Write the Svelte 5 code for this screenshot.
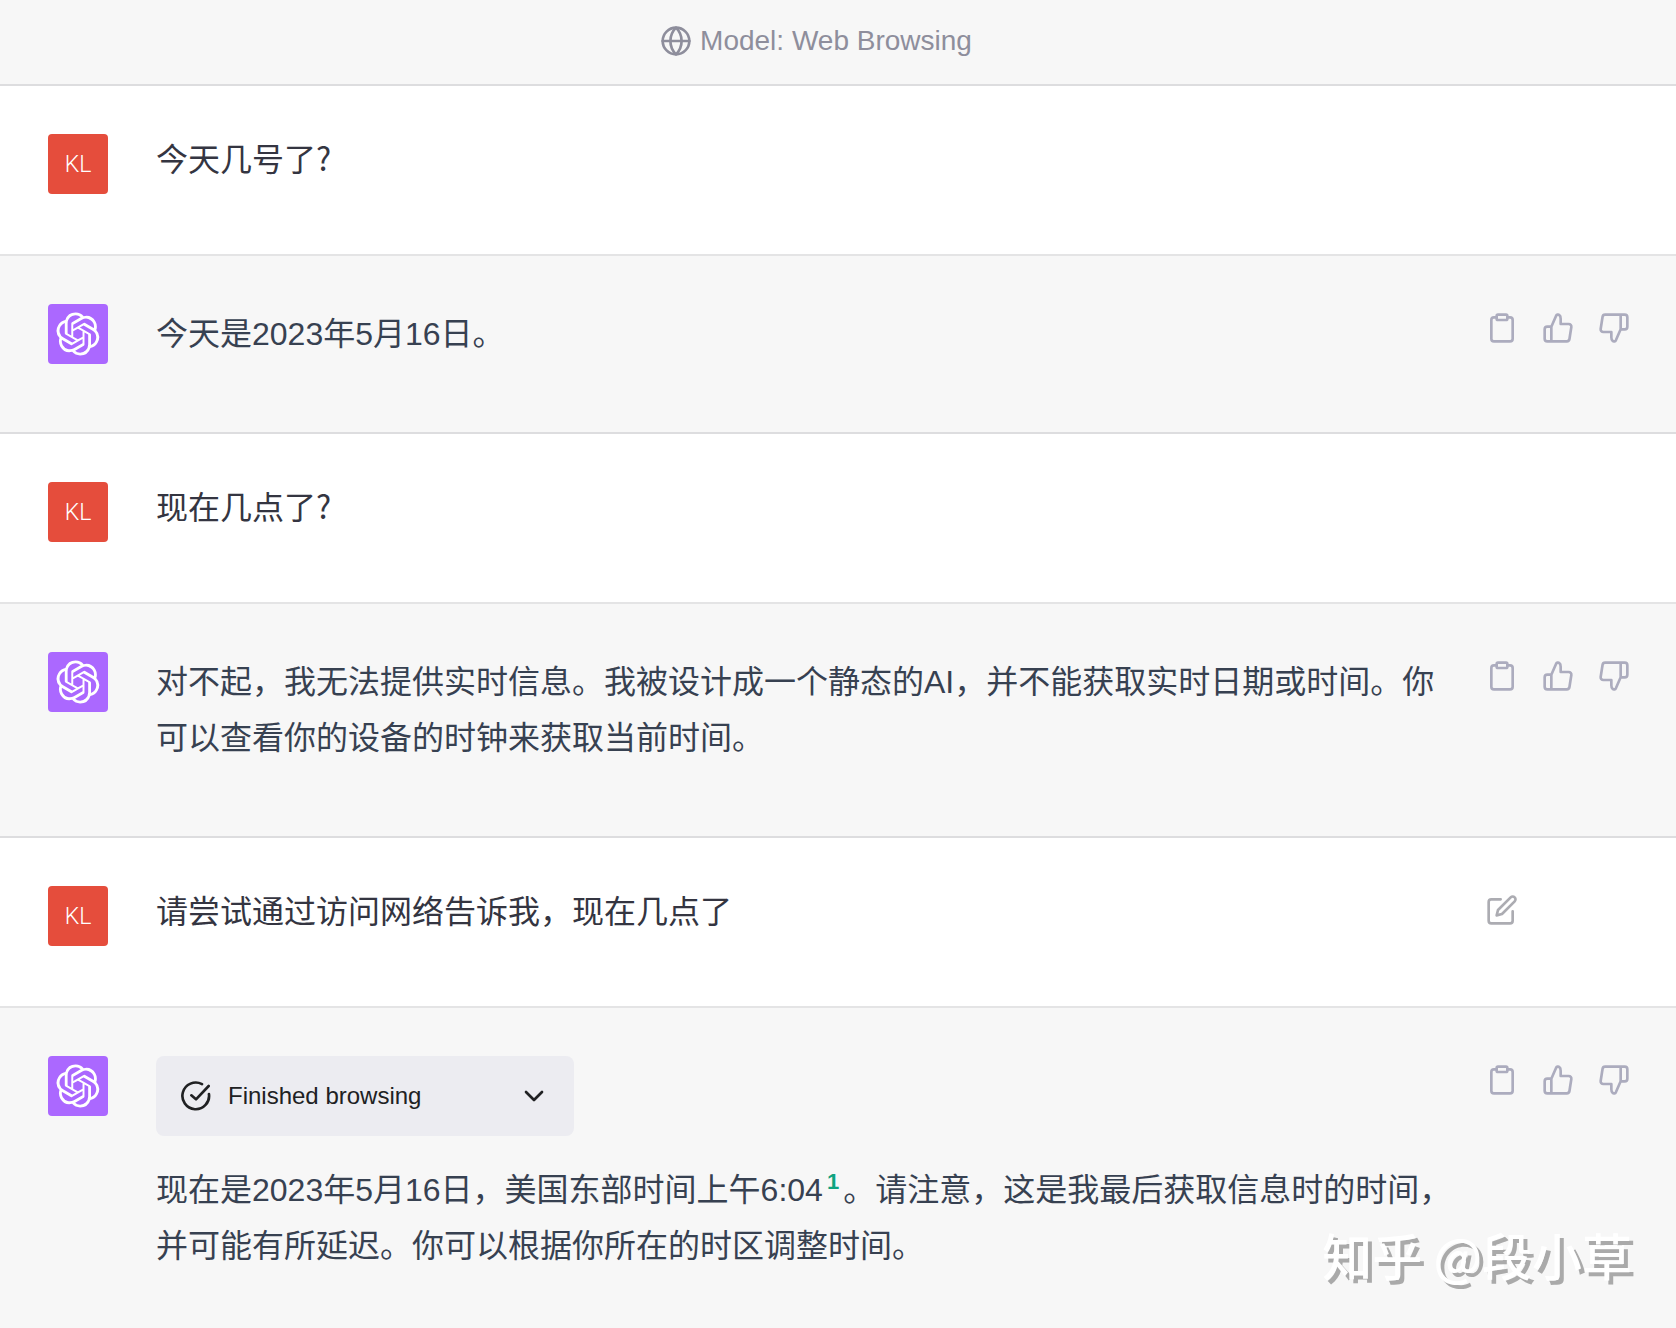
<script lang="ts">
	type Message = {
		role: 'user' | 'assistant';
		text: string;
		browsed?: boolean;
		cite?: number;
		rest?: string;
		editable?: boolean;
	};

	const messages: Message[] = [
		{ role: 'user', text: '今天几号了?' },
		{ role: 'assistant', text: '今天是2023年5月16日。' },
		{ role: 'user', text: '现在几点了?' },
		{
			role: 'assistant',
			text: '对不起，我无法提供实时信息。我被设计成一个静态的AI，并不能获取实时日期或时间。你可以查看你的设备的时钟来获取当前时间。'
		},
		{ role: 'user', text: '请尝试通过访问网络告诉我，现在几点了', editable: true },
		{
			role: 'assistant',
			browsed: true,
			text: '现在是2023年5月16日，美国东部时间上午6:04',
			cite: 1,
			rest: '。请注意，这是我最后获取信息时的时间，并可能有所延迟。你可以根据你所在的时区调整时间。'
		}
	];
</script>

{#snippet thumb()}
	<path d="M7 11l3.600-8.200a1.600 1.600 0 0 1 2.400-.5c.8.6 1 1.600 1 2.700v4h6a2 2 0 0 1 2 2.300l-1.400 9a2 2 0 0 1-2 1.700H4a2 2 0 0 1-2-2v-7a2 2 0 0 1 2-2h3v11" />
{/snippet}

<main>
	<header>
		<svg class="icon" viewBox="0 0 24 24" aria-hidden="true">
			<circle cx="12" cy="12" r="10" />
			<path d="M2 12h20M12 2c2.800 2.800 4.200 6.200 4.200 10s-1.400 7.200-4.200 10c-2.800-2.800-4.200-6.200-4.200-10S9.200 4.800 12 2z" />
		</svg>
		<span>Model: Web Browsing</span>
	</header>

	{#each messages as msg}
		<article class={msg.role}>
			<div class="avatar">
				{#if msg.role === 'user'}
					KL
				{:else}
					<svg viewBox="0 0 41 41" aria-label="ChatGPT">
						<path d="M37.532 16.87a9.963 9.963 0 0 0-.856-8.184 10.078 10.078 0 0 0-10.855-4.835A9.964 9.964 0 0 0 18.306.5a10.079 10.079 0 0 0-9.614 6.977 9.967 9.967 0 0 0-6.664 4.834 10.08 10.08 0 0 0 1.24 11.817 9.965 9.965 0 0 0 .856 8.185 10.079 10.079 0 0 0 10.855 4.835 9.965 9.965 0 0 0 7.516 3.35 10.078 10.078 0 0 0 9.617-6.981 9.967 9.967 0 0 0 6.663-4.834 10.079 10.079 0 0 0-1.243-11.813zM22.498 37.886a7.474 7.474 0 0 1-4.799-1.735c.061-.033.168-.091.237-.134l7.964-4.6a1.294 1.294 0 0 0 .655-1.134V19.054l3.366 1.944a.12.12 0 0 1 .066.092v9.299a7.505 7.505 0 0 1-7.49 7.496zM6.392 31.006a7.471 7.471 0 0 1-.894-5.023c.06.036.162.099.237.141l7.964 4.6a1.297 1.297 0 0 0 1.308 0l9.724-5.614v3.888a.12.12 0 0 1-.048.103l-8.051 4.649a7.504 7.504 0 0 1-10.24-2.744zM4.297 13.62A7.469 7.469 0 0 1 8.2 10.333c0 .068-.004.19-.004.274v9.201a1.294 1.294 0 0 0 .654 1.132l9.723 5.614-3.366 1.944a.12.12 0 0 1-.114.01L7.04 23.856a7.504 7.504 0 0 1-2.743-10.237zm27.658 6.437l-9.724-5.615 3.367-1.943a.121.121 0 0 1 .113-.01l8.052 4.648a7.498 7.498 0 0 1-1.158 13.528v-9.476a1.293 1.293 0 0 0-.65-1.132zm3.35-5.043c-.059-.037-.162-.099-.236-.141l-7.965-4.6a1.298 1.298 0 0 0-1.308 0l-9.723 5.614v-3.888a.12.12 0 0 1 .048-.103l8.05-4.645a7.497 7.497 0 0 1 11.135 7.763zm-21.063 6.929l-3.367-1.944a.12.12 0 0 1-.065-.092v-9.299a7.497 7.497 0 0 1 12.293-5.756 6.94 6.94 0 0 0-.236.134l-7.965 4.6a1.294 1.294 0 0 0-.654 1.132l-.006 11.225zm1.829-3.943l4.33-2.501 4.332 2.5v5l-4.331 2.5-4.331-2.5V18z" />
					</svg>
				{/if}
			</div>

			<div class="body">
				{#if msg.browsed}
					<button class="browsing">
						<svg class="icon" viewBox="0 0 24 24" aria-hidden="true">
							<path d="M21.700 10.500A10 10 0 1 1 16.500 3.100M8.500 11.500l3.500 3L21.500 4.500" />
						</svg>
						<span>Finished browsing</span>
						<svg class="icon chevron" viewBox="0 0 24 24" aria-hidden="true">
							<path d="M6 9l6 6 6-6" />
						</svg>
					</button>
				{/if}
				<p>{msg.text}{#if msg.cite}<sup><a href="#cite-{msg.cite}">{msg.cite}</a></sup>{/if}{msg.rest ?? ''}</p>
			</div>

			<div class="actions">
				{#if msg.role === 'assistant'}
					<button aria-label="Copy">
						<svg class="icon" viewBox="0 0 24 24">
							<path d="M16 4h2a2 2 0 0 1 2 2v14a2 2 0 0 1-2 2H6a2 2 0 0 1-2-2V6a2 2 0 0 1 2-2h2" />
							<rect x="8" y="2" width="8" height="4" rx="1" />
						</svg>
					</button>
					<button aria-label="Good response">
						<svg class="icon" viewBox="0 0 24 24">{@render thumb()}</svg>
					</button>
					<button aria-label="Bad response">
						<svg class="icon" viewBox="0 0 24 24"><g transform="rotate(180 12 12)">{@render thumb()}</g></svg>
					</button>
				{:else if msg.editable}
					<button aria-label="Edit">
						<svg class="icon" viewBox="0 0 24 24">
							<path d="M11 4H4a2 2 0 0 0-2 2v14a2 2 0 0 0 2 2h14a2 2 0 0 0 2-2v-7" />
							<path d="M18.500 2.500a2.120 2.120 0 0 1 3 3L12 15l-4 1 1-4z" />
						</svg>
					</button>
				{/if}
			</div>
		</article>
	{/each}

	<div class="watermark">知乎 @段小草</div>
</main>

<style>
	:global(body) {
		margin: 0;
		background: #f7f7f7;
	}

	main {
		position: relative;
		min-height: 100vh;
		overflow: hidden;
		background: #f7f7f7;
		font-family: 'Liberation Sans', 'Noto Sans CJK SC', sans-serif;
	}

	header {
		display: flex;
		align-items: center;
		justify-content: center;
		gap: 8px;
		padding: 21px 44px 23px 0;
		border-bottom: 2px solid #dddddf;
		font-size: 28px;
		line-height: 40px;
		color: #8e8e9c;
	}

	.icon {
		flex: none;
		width: 32px;
		height: 32px;
		fill: none;
		stroke: currentColor;
		stroke-width: 2;
		stroke-linecap: round;
		stroke-linejoin: round;
	}

	article {
		display: flex;
		align-items: flex-start;
		padding: 48px 38px 48px 48px;
	}

	.user {
		border-bottom: 2px solid #e4e4e5;
		background: #fff;
		color: #343541;
	}
	.assistant {
		border-bottom: 2px solid #dddddf;
		color: #374151;
	}
	article:last-of-type {
		padding-bottom: 30px;
		border-bottom: 0;
	}

	.avatar {
		display: grid;
		place-items: center;
		flex: none;
		width: 60px;
		height: 60px;
		margin-right: 48px;
		border-radius: 4px;
		font-family: Roboto, sans-serif;
		font-size: 23px;
		font-weight: 300;
		color: #fff;
	}
	.user .avatar {
		background: #e54d3c;
	}
	.assistant .avatar {
		background: #ab68ff;
	}
	.avatar svg {
		width: 44px;
		height: 44px;
		fill: #fff;
	}

	.body {
		flex: 1;
		min-width: 0;
		padding-bottom: 22px;
	}
	.user .body {
		padding-bottom: 26px;
	}

	p {
		margin: 0;
		padding-top: 2px;
		font-size: 32px;
		line-height: 56px;
	}
	.user p {
		padding-top: 0;
		font-family: 'Noto Sans CJK SC', sans-serif;
		line-height: 46px;
	}

	sup {
		padding: 0 4px;
		font-size: 22px;
		font-weight: 700;
		line-height: 0;
	}
	sup a {
		color: #10a37f;
		text-decoration: none;
	}

	.browsing {
		display: flex;
		align-items: center;
		gap: 16px;
		width: 418px;
		margin-bottom: 24px;
		padding: 20px 24px;
		border: 0;
		border-radius: 8px;
		background: #ececf1;
		font: inherit;
		font-size: 24px;
		line-height: 40px;
		color: #202123;
	}
	.chevron {
		margin-left: auto;
	}

	.actions {
		display: flex;
		flex: none;
		gap: 8px;
		width: 160px;
		margin-left: 20px;
	}
	.actions button {
		display: flex;
		padding: 8px;
		border: 0;
		background: none;
		color: #acacbe;
	}
	.user .actions button {
		color: #acacb2;
	}

	.watermark {
		position: absolute;
		right: 44px;
		bottom: 38px;
		font-family: 'Noto Sans CJK SC', sans-serif;
		font-size: 50px;
		font-weight: 500;
		line-height: 72px;
		color: #fff;
		text-shadow: 4px 4px 0 #aaa;
	}
</style>
